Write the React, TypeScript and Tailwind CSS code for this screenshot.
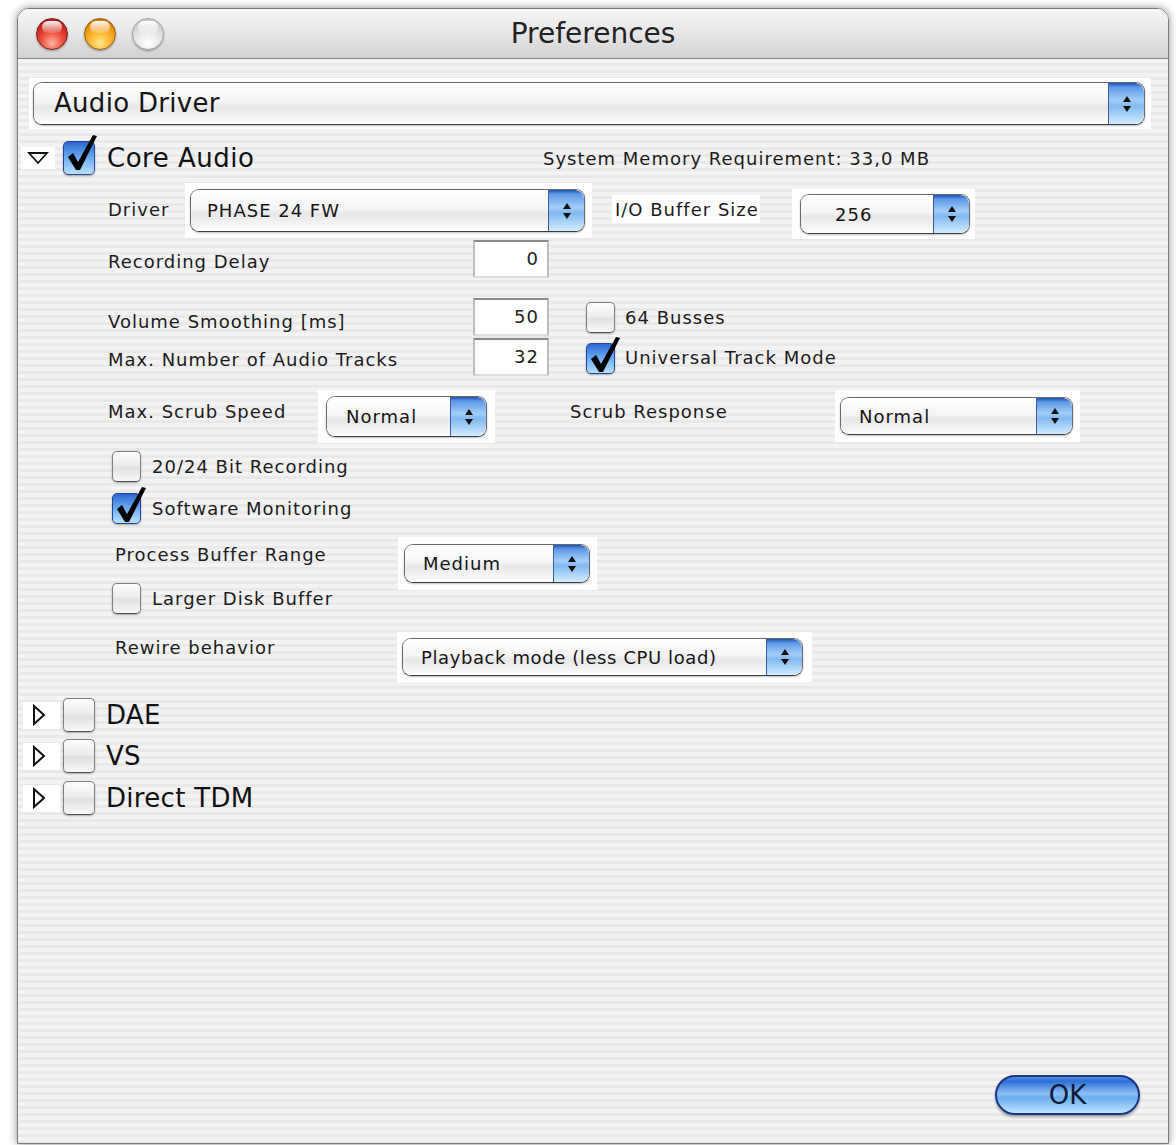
import type { ReactNode } from "react";

// Aqua style building blocks for the preferences sheet

function Stepper() {
  return (
    <div className="flex h-full w-[36px] shrink-0 items-center justify-center rounded-r-[9px] border-l border-[#3a5cae] bg-[image:linear-gradient(180deg,#1d4fb8_0px,#5d98e6_4px,#a4cdf7_42%,#82b8ef_56%,#d2edff_100%)]">
      <svg width="10" height="22" viewBox="0 0 10 22">
        <path d="M5 3 L9 9 L1 9 Z M1 13 L9 13 L5 19 Z" fill="#111" />
      </svg>
    </div>
  );
}

function Popup({
  value,
  className,
  textClass = "pl-[16px] text-[18px] tracking-[1px]",
}: {
  value: string;
  className: string;
  textClass?: string;
}) {
  return (
    <div
      className={`flex overflow-hidden rounded-[9px] border border-[#6a6a6a] border-b-[#3c3c3c] shadow-[0_1px_2px_rgba(0,0,0,0.25)] ${className}`}
    >
      <div
        className={`flex min-w-0 flex-1 items-center whitespace-nowrap bg-[image:linear-gradient(180deg,#ffffff,#f5f5f5_45%,#e7e7e7_58%,#fdfdfd)] text-[#151515] ${textClass}`}
      >
        {value}
      </div>
      <Stepper />
    </div>
  );
}

function WhiteBox({ className, children }: { className: string; children: ReactNode }) {
  return <div className={`flex shrink-0 items-center bg-white ${className}`}>{children}</div>;
}

function Checkbox({ checked, size = "sm" }: { checked?: boolean; size?: "sm" | "lg" }) {
  const dims = size === "lg" ? "h-[34px] w-[32px]" : "h-[31px] w-[29px]";
  const skin = checked
    ? "border-[#24469a] bg-[image:linear-gradient(180deg,#2a67d2,#5f9fec_40%,#7db8f4_60%,#b8e0ff)]"
    : "border-[#808080] border-b-[#4f4f4f] bg-[image:linear-gradient(180deg,#fdfdfd,#ececec_45%,#e0e0e0_55%,#f8f8f8)]";
  return (
    <div
      className={`relative shrink-0 rounded-[5px] border shadow-[0_1px_2px_rgba(0,0,0,0.3)] ${dims} ${skin}`}
    >
      {checked && (
        <svg
          className="absolute -top-[9px] left-[1px]"
          width="34"
          height="40"
          viewBox="0 0 34 40"
        >
          <path
            d="M3 24 L8 20 L13 29 L28 2 L32 3 L15 37 L11 37 Z"
            fill="#000"
          />
        </svg>
      )}
    </div>
  );
}

function TextField({ value }: { value: string }) {
  return (
    <div className="flex h-[38px] w-[76px] shrink-0 justify-end border-2 border-x-[#bdbdbd] border-t-[#8a8a8a] border-b-[#dedede] bg-white pr-[8px] pt-[3px] text-[18px] tracking-[1px] text-[#222]">
      {value}
    </div>
  );
}

function Disclosure({ open }: { open?: boolean }) {
  if (open) {
    return (
      <div className="ml-[3px] flex h-[22px] w-[34px] shrink-0 items-center justify-center bg-white">
        <svg width="22" height="14" viewBox="0 0 22 14">
          <path d="M2 2 L20 2 L11 12 Z" fill="none" stroke="#111" strokeWidth="1.8" strokeLinejoin="miter" />
        </svg>
      </div>
    );
  }
  return (
    <div className="ml-[5px] flex h-[27px] w-[37px] shrink-0 items-center bg-white pl-[9px]">
      <svg width="14" height="22" viewBox="0 0 14 22">
        <path d="M2 2 L12 11 L2 20 Z" fill="none" stroke="#111" strokeWidth="2" strokeLinejoin="miter" />
      </svg>
    </div>
  );
}

function Light({ tone }: { tone: "red" | "yellow" | "gray" }) {
  const skin =
    tone === "red"
      ? "border-[#7c1d16] bg-[image:radial-gradient(circle_at_50%_80%,#ffb4a4_0%,#f0503e_38%,#c4231b_72%,#8e1711_100%)]"
      : tone === "yellow"
        ? "border-[#9a5a06] bg-[image:radial-gradient(circle_at_50%_80%,#ffe88a_0%,#fbb52a_40%,#e48a0e_72%,#a35e03_100%)]"
        : "border-[#a3a3a3] bg-[image:radial-gradient(circle_at_50%_80%,#ffffff_0%,#e6e6e6_45%,#cfcfcf_75%,#b3b3b3_100%)]";
  return (
    <div className={`h-[32px] w-[32px] rounded-full border shadow-[0_1px_2px_rgba(0,0,0,0.35)] ${skin}`}>
      <div className="mx-auto mt-[2px] h-[12px] w-[20px] rounded-full bg-[image:linear-gradient(180deg,rgba(255,255,255,0.95),rgba(255,255,255,0.15))]" />
    </div>
  );
}

const label = "shrink-0 whitespace-nowrap text-[18px] tracking-[1px] text-[#1c1c1c]";

export default function App() {
  return (
    <div className="h-[1145px] w-[1176px] overflow-hidden bg-white pl-[17px] pt-[8px] font-['DejaVu_Sans',sans-serif]">
      <div className="flex h-[1136px] w-[1152px] flex-col overflow-hidden rounded-t-[12px] border border-[#7a7a7a] shadow-[0_0_9px_rgba(0,0,0,0.45)]">
        {/* title bar */}
        <div className="grid h-[50px] shrink-0 grid-cols-[1fr_auto_1fr] items-center border-b border-[#858585] bg-[image:linear-gradient(180deg,#f6f6f6,#e6e6e6_50%,#d2d2d2)]">
          <div className="flex items-center gap-[16px] pl-[18px]">
            <Light tone="red" />
            <Light tone="yellow" />
            <Light tone="gray" />
          </div>
          <div className="text-[28px] text-[#222]">Preferences</div>
          <div />
        </div>

        {/* pinstriped body */}
        <div className="flex flex-1 flex-col bg-[image:repeating-linear-gradient(180deg,#f3f3f3_0px,#f3f3f3_4px,#e9e9e9_4px,#e9e9e9_7px)]">
          <WhiteBox className="ml-[11px] mt-[19px] h-[51px] w-[1122px] pl-[4px]">
            <Popup
              value="Audio Driver"
              className="h-[43px] w-[1112px]"
              textClass="pl-[20px] text-[26px] tracking-[0.3px]"
            />
          </WhiteBox>

          {/* Core Audio */}
          <div className="mt-[11px] flex h-[36px] items-center">
            <Disclosure open />
            <div className="ml-[8px]">
              <Checkbox checked size="lg" />
            </div>
            <div className="ml-[12px] w-[436px] shrink-0 text-[26px] tracking-[0.5px] text-[#111]">
              Core Audio
            </div>
            <div className={label}>System Memory Requirement: 33,0 MB</div>
          </div>

          <div className="mt-[7px] flex h-[55px] items-start">
            <div className={`ml-[90px] mt-[13px] w-[77px] ${label}`}>Driver</div>
            <WhiteBox className="h-[55px] w-[407px] pl-[5px] pr-[7px]">
              <Popup value="PHASE 24 FW" className="h-[43px] flex-1" />
            </WhiteBox>
            <div className={`ml-[20px] mt-[12px] flex h-[28px] w-[148px] items-center bg-white px-[3px] ${label}`}>
              I/O Buffer Size
            </div>
            <WhiteBox className="ml-[32px] mt-[6px] h-[50px] w-[183px] pl-[8px] pr-[5px]">
              <Popup value="256" className="h-[40px] flex-1" textClass="pl-[34px] text-[18px] tracking-[1px]" />
            </WhiteBox>
          </div>

          <div className="mt-[2px] flex h-[38px] items-center">
            <div className={`ml-[90px] w-[365px] pt-[5px] ${label}`}>Recording Delay</div>
            <TextField value="0" />
          </div>

          <div className="mt-[20px] flex h-[38px] items-center">
            <div className={`ml-[90px] w-[365px] pt-[8px] ${label}`}>Volume Smoothing [ms]</div>
            <TextField value="50" />
            <div className="ml-[37px]">
              <Checkbox />
            </div>
            <div className={`ml-[10px] ${label}`}>64 Busses</div>
          </div>

          <div className="mt-[2px] flex h-[38px] items-center">
            <div className={`ml-[90px] w-[365px] pt-[4px] ${label}`}>Max. Number of Audio Tracks</div>
            <TextField value="32" />
            <div className="ml-[37px] mt-[3px]">
              <Checkbox checked />
            </div>
            <div className={`ml-[10px] ${label}`}>Universal Track Mode</div>
          </div>

          <div className="mt-[14px] flex h-[53px] items-start">
            <div className={`ml-[90px] mt-[8px] w-[210px] ${label}`}>Max. Scrub Speed</div>
            <WhiteBox className="h-[53px] w-[177px] pl-[8px] pr-[8px]">
              <Popup value="Normal" className="h-[41px] flex-1" textClass="pl-[19px] text-[18px] tracking-[1px]" />
            </WhiteBox>
            <div className={`ml-[75px] mt-[8px] w-[265px] ${label}`}>Scrub Response</div>
            <WhiteBox className="h-[52px] w-[245px] pl-[5px] pr-[7px]">
              <Popup value="Normal" className="h-[38px] flex-1" textClass="pl-[18px] text-[18px] tracking-[1px]" />
            </WhiteBox>
          </div>

          <div className="mt-[7px] flex h-[32px] items-center">
            <div className="ml-[94px]">
              <Checkbox />
            </div>
            <div className={`ml-[11px] ${label}`}>20/24 Bit Recording</div>
          </div>

          <div className="mt-[10px] flex h-[32px] items-center">
            <div className="ml-[94px]">
              <Checkbox checked />
            </div>
            <div className={`ml-[11px] ${label}`}>Software Monitoring</div>
          </div>

          <div className="mt-[13px] flex h-[45px] items-start">
            <div className={`ml-[97px] mt-[4px] w-[283px] ${label}`}>Process Buffer Range</div>
            <WhiteBox className="h-[53px] w-[199px] pl-[6px] pr-[7px]">
              <Popup value="Medium" className="h-[39px] flex-1" textClass="pl-[18px] text-[18px] tracking-[1px]" />
            </WhiteBox>
          </div>

          <div className="flex h-[32px] items-center">
            <div className="ml-[94px]">
              <Checkbox />
            </div>
            <div className={`ml-[11px] ${label}`}>Larger Disk Buffer</div>
          </div>

          <div className="mt-[18px] flex h-[50px] items-start">
            <div className={`ml-[97px] mt-[2px] w-[282px] ${label}`}>Rewire behavior</div>
            <WhiteBox className="h-[50px] w-[415px] pl-[5px] pr-[9px]">
              <Popup
                value="Playback mode (less CPU load)"
                className="h-[38px] flex-1"
                textClass="pl-[18px] text-[18px] tracking-[0.6px]"
              />
            </WhiteBox>
          </div>

          {/* other drivers */}
          {["DAE", "VS", "Direct TDM"].map((name, i) => (
            <div
              key={name}
              className={`flex h-[32px] items-center ${i === 0 ? "mt-[17px]" : i === 1 ? "mt-[9px]" : "mt-[10px]"}`}
            >
              <Disclosure />
              <div className="ml-[3px]">
                <Checkbox size="lg" />
              </div>
              <div className="ml-[11px] text-[26px] tracking-[0.3px] text-[#111]">{name}</div>
            </div>
          ))}

          <div className="flex-1" />

          <div className="flex justify-end pb-[28px] pr-[28px]">
            <button className="flex h-[40px] w-[145px] items-center justify-center rounded-full border-2 border-[#1b3583] bg-[image:linear-gradient(180deg,#4d8ee6_0%,#2e6fd6_12%,#8cc0f3_46%,#6aaef1_58%,#bde5ff_100%)] text-[26px] text-[#0f1a36] shadow-[0_2px_3px_rgba(0,0,0,0.35)]">
              OK
            </button>
          </div>
        </div>
      </div>
    </div>
  );
}
